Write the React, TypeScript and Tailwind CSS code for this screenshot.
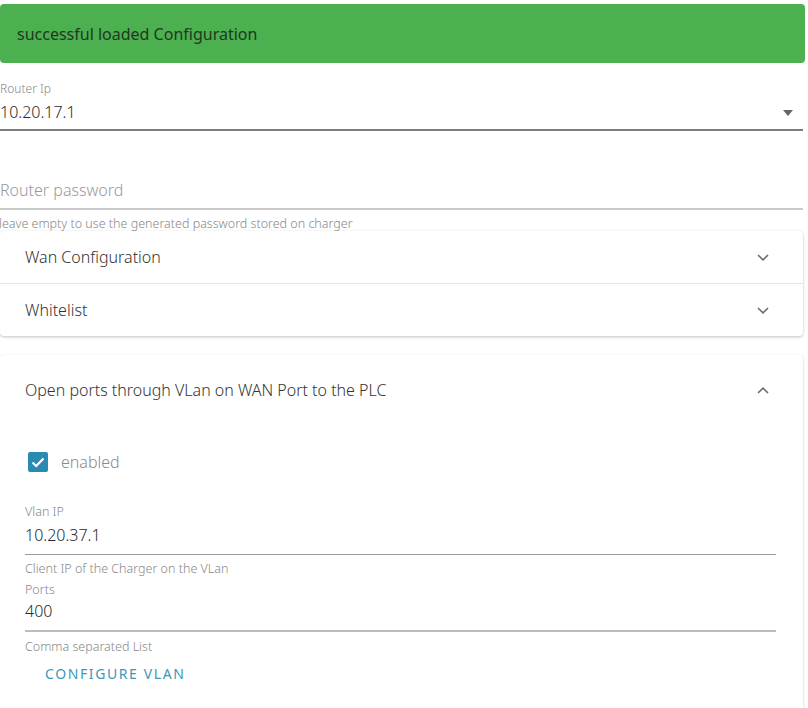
import React from "react";

const font = { fontFamily: '"Noto Sans", "Open Sans", sans-serif' };

function Chevron({ up = false }: { up?: boolean }) {
  return (
    <svg width="14" height="9" viewBox="0 0 14 9" className="text-[#6b6b6b]">
      {up ? (
        <path d="M2 7 L7 2.2 L12 7" fill="none" stroke="currentColor" strokeWidth="1.6" />
      ) : (
        <path d="M2 2 L7 6.8 L12 2" fill="none" stroke="currentColor" strokeWidth="1.6" />
      )}
    </svg>
  );
}

function AccordionRow({ title, last = false }: { title: string; last?: boolean }) {
  return (
    <div
      className={`flex items-center justify-between pl-[25px] pr-[33px] ${
        last ? "h-[52px]" : "h-[53px] border-b border-[#e6e6e6]"
      }`}
    >
      <span className="text-[16px] font-light text-[#333]">{title}</span>
      <Chevron />
    </div>
  );
}

export default function App() {
  return (
    <div style={font} className="w-[808px] h-[708px] overflow-hidden bg-white relative">
      {/* status banner */}
      <div className="mt-[4px] w-[805px] h-[59px] bg-[#4caf50] rounded-[4px] flex items-center pl-[17px] text-[16px] text-[#1e3a1f]">
        successful loaded Configuration
      </div>

      {/* router ip select */}
      <div className="w-[803px] mt-[19px]">
        <div className="text-[12px] font-light leading-[14px] text-[#888]">Router Ip</div>
        <div className="flex items-center justify-between h-[24px] mt-[4px]">
          <span className="text-[16px] font-light text-[#2a2a2a]">10.20.17.1</span>
          <svg width="10" height="6" viewBox="0 0 10 6" className="mr-[10px] mt-[2px]">
            <path d="M0 0 L10 0 L5 6 Z" fill="#666" />
          </svg>
        </div>
        <div className="mt-[5px] h-[2px] bg-[#7d7d7d]" />
      </div>

      {/* router password */}
      <div className="w-[803px] mt-[47px]">
        <div className="h-[24px] flex items-center text-[16px] font-light text-[#999]">Router password</div>
        <div className="mt-[6px] h-[2px] bg-[#c9c9c9]" />
        <div className="ml-[-1px] mt-[7px] text-[12.5px] font-light leading-[14px] text-[#888]">
          leave empty to use the generated password stored on charger
        </div>
      </div>

      {/* collapsed sections */}
      <div className="w-[803px] bg-white rounded-[4px] shadow-[0_1px_3px_rgba(0,0,0,0.25)]">
        <AccordionRow title="Wan Configuration" />
        <AccordionRow title="Whitelist" last />
      </div>

      {/* expanded VLan section */}
      <div className="w-[803px] mt-[19px] bg-white rounded-[4px] shadow-[0_1px_3px_rgba(0,0,0,0.2)] pb-[20px]">
        <div className="flex items-center justify-between h-[70px] pl-[25px] pr-[33px]">
          <span className="text-[16px] font-light text-[#333]">Open ports through VLan on WAN Port to the PLC</span>
          <Chevron up />
        </div>

        <div className="pl-[25px] pr-[27px]">
          <label className="flex items-center h-[24px] mt-[25px] pl-[3px]">
            <span className="w-[20px] h-[20px] rounded-[2px] bg-[#2a8ab2] flex items-center justify-center">
              <svg width="14" height="11" viewBox="0 0 14 11">
                <path d="M1.5 5.5 L5.2 9 L12.5 1.5" fill="none" stroke="#fff" strokeWidth="2.2" />
              </svg>
            </span>
            <span className="ml-[13px] text-[16px] font-light text-[#8a8a8a]">enabled</span>
          </label>

          <div className="mt-[31px]">
            <div className="text-[12.5px] font-light leading-[14px] text-[#888]">Vlan IP</div>
            <div className="h-[24px] mt-[4px] flex items-center text-[16px] font-light text-[#2a2a2a]">10.20.37.1</div>
            <div className="mt-[7px] h-[1px] bg-[#9a9a9a]" />
            <div className="mt-[7px] text-[12.5px] font-light leading-[14px] text-[#888]">Client IP of the Charger on the VLan</div>
          </div>

          <div className="mt-[7px]">
            <div className="text-[12.5px] font-light leading-[14px] text-[#888]">Ports</div>
            <div className="h-[24px] mt-[2px] flex items-center text-[16px] font-light text-[#2a2a2a]">400</div>
            <div className="mt-[7px] h-[2px] bg-[#bdbdbd]" />
            <div className="mt-[8px] text-[12.5px] font-light leading-[14px] text-[#888]">Comma separated List</div>
          </div>

          <button className="mt-[1px] ml-[20px] h-[36px] flex items-center text-[14px] tracking-[1.6px] text-[#3e98b5]">
            CONFIGURE VLAN
          </button>
        </div>
      </div>
    </div>
  );
}
